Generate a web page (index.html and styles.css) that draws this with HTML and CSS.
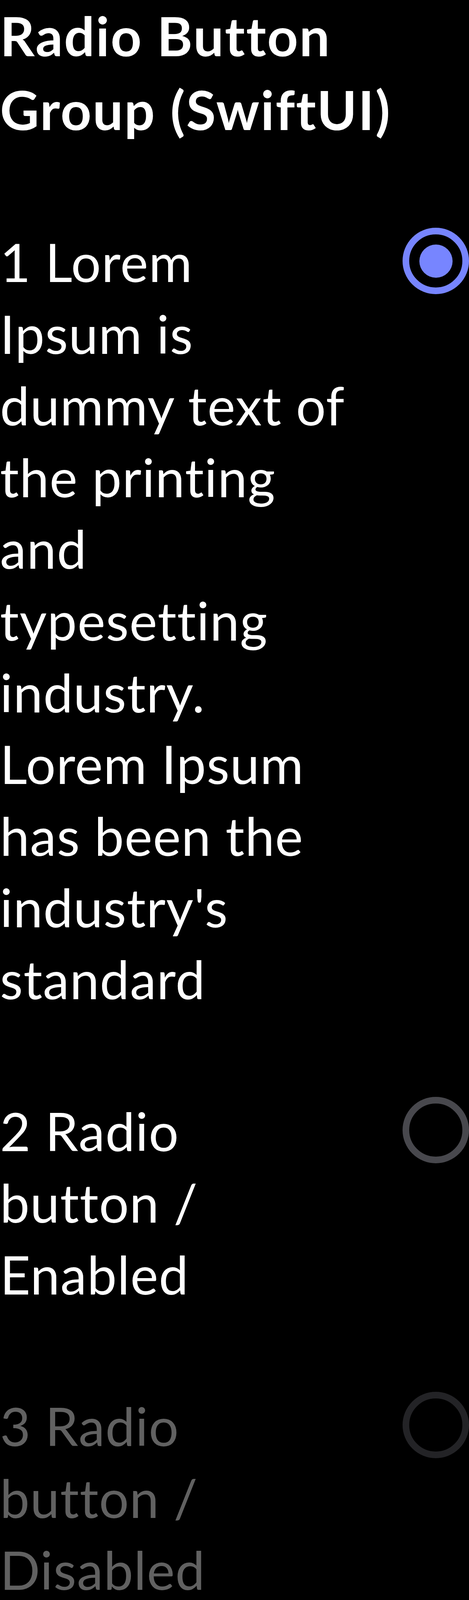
FILE: index.html
```html
<!DOCTYPE html>
<html lang="en">
<head>
<meta charset="utf-8">
<title>Radio Button Group (SwiftUI)</title>
<link rel="stylesheet" href="styles.css">
</head>
<body>
<main class="page">
  <h1 class="title">Radio Button Group (SwiftUI)</h1>

  <div class="item">
    <div class="label">
      <p class="text">1 Lorem<br>Ipsum is<br>dummy text of<br>the printing<br>and<br>typesetting<br>industry.<br>Lorem Ipsum<br>has been the<br>industry's<br>standard</p>
    </div>
    <span class="radio radio-selected"><span class="dot"></span></span>
  </div>

  <div class="item">
    <div class="label">
      <p class="text">2 Radio<br>button /<br>Enabled</p>
    </div>
    <span class="radio radio-enabled"></span>
  </div>

  <div class="item">
    <div class="label">
      <p class="text text-disabled">3 Radio<br>button /<br>Disabled</p>
    </div>
    <span class="radio radio-disabled"></span>
  </div>

  <div class="item">
    <div class="label">
      <p class="text">4 Radio<br>button / Error</p>
      <p class="caption caption-error">Error</p>
    </div>
    <span class="radio radio-error"></span>
  </div>

  <div class="item">
    <div class="label">
      <p class="text">5 Radio<br>button /<br>Success</p>
      <p class="caption caption-success">Success</p>
    </div>
    <span class="radio radio-success"></span>
  </div>

  <div class="item">
    <div class="label">
      <p class="text">6 Radio<br>button /<br>Warning</p>
      <p class="caption caption-warning">Warning</p>
    </div>
    <span class="radio radio-warning"></span>
  </div>
</main>
</body>
</html>
```

FILE: styles.css
```css
html, body {
  margin: 0;
  padding: 0;
  background: #000000;
}

body {
  font-family: "Lato", "Open Sans", sans-serif;
  color: #ffffff;
}

.page {
  display: flex;
  flex-direction: column;
  gap: 205px;
}

.title {
  margin: -4px 0 4px;
  font-size: 138px;
  font-weight: 700;
  line-height: 189px;
  letter-spacing: 3px;
  color: #ffffff;
}

.item {
  display: flex;
  justify-content: space-between;
  align-items: flex-start;
}

.label {
  flex: 0 1 900px;
  display: flex;
  flex-direction: column;
}

.text {
  margin: -4px 0 4px;
  font-size: 135px;
  font-weight: 400;
  line-height: 183.6px;
  letter-spacing: 1.5px;
  color: #ffffff;
}

.text-disabled {
  color: #616161;
}

.caption {
  margin: -3px 0 3px;
  font-size: 115px;
  font-weight: 400;
  line-height: 157px;
  letter-spacing: 1.5px;
}

.caption-error { color: #f47f7b; }
.caption-success { color: #5fbb8c; }
.caption-warning { color: #fcebc2; }

.radio {
  flex: 0 0 170px;
  width: 170px;
  height: 170px;
  box-sizing: border-box;
  border: 17px solid #48484d;
  border-radius: 50%;
  display: flex;
  align-items: center;
  justify-content: center;
}

.radio-selected { border-color: #7785ff; }
.radio-enabled { border-color: #48484d; }
.radio-disabled { border-color: #232326; }
.radio-error { border-color: #f47f7b; }
.radio-success { border-color: #5fbb8c; }
.radio-warning { border-color: #f6cd70; }

.dot {
  width: 85px;
  height: 85px;
  border-radius: 50%;
  background: #7785ff;
}
```
